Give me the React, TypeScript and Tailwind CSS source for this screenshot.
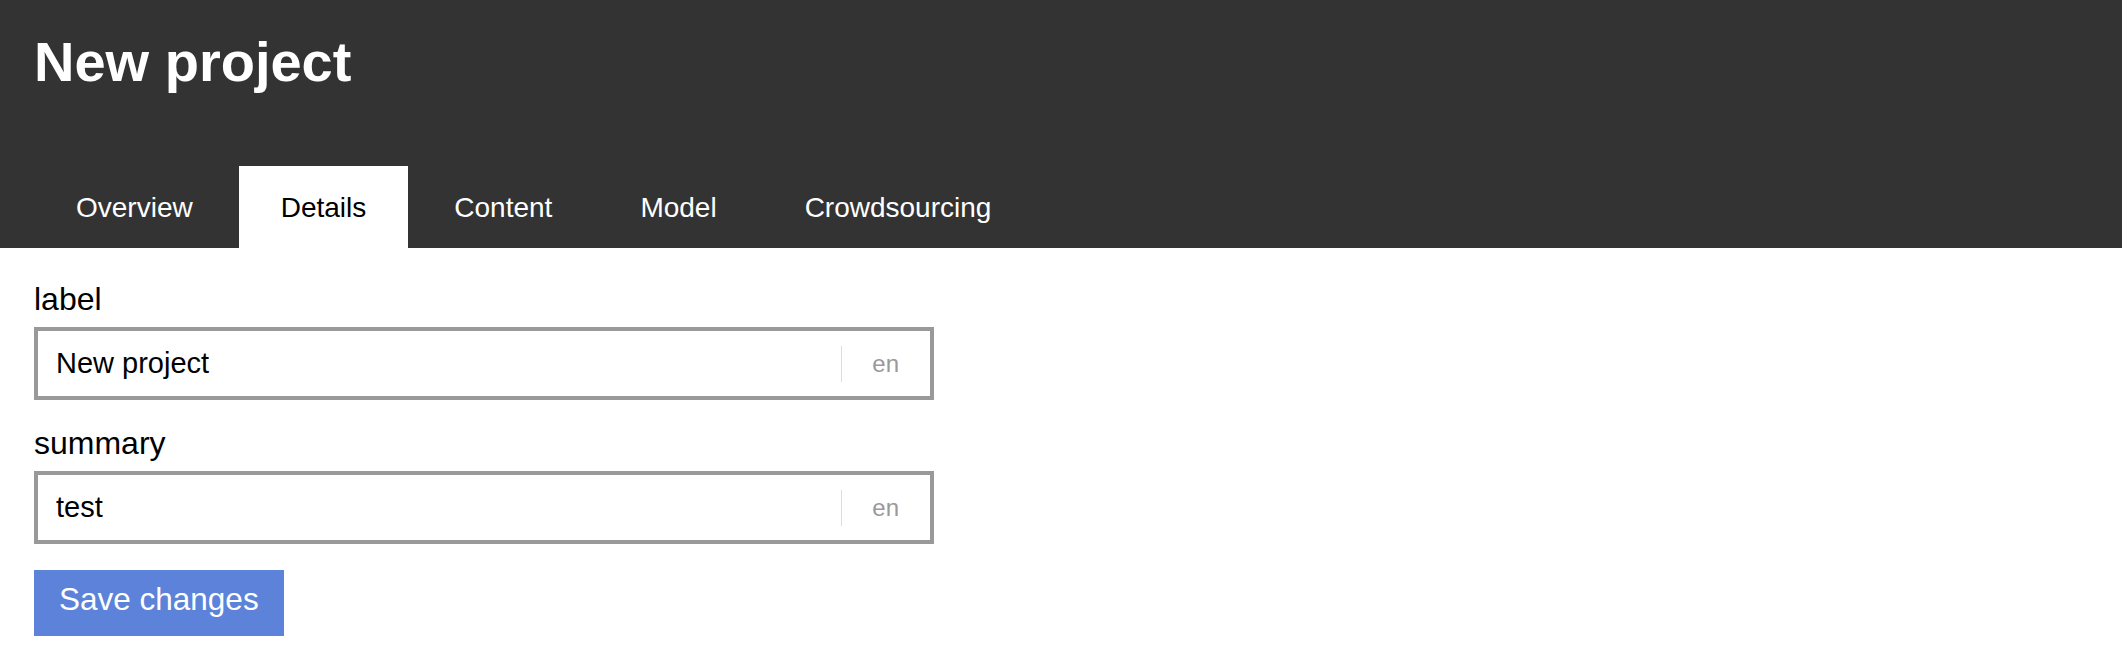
const TABS = ['Overview', 'Details', 'Content', 'Model', 'Crowdsourcing'];

function LangField({ label, value }: { label: string; value: string }) {
  return (
    <div className="flex flex-col">
      <label className="text-[32px] leading-none text-black mb-[12px]">{label}</label>
      <div className="flex items-center w-[900px] h-[73px] border-4 border-[#999] bg-white">
        <input
          className="flex-1 min-w-0 h-full pl-[18px] text-[29px] text-black bg-transparent outline-none"
          style={{ fontFamily: '"Liberation Sans", Arial, sans-serif' }}
          defaultValue={value}
        />
        <span className="flex items-center h-[36px] border-l border-[#ddd] pl-[30px] pr-[31px] text-[24px] text-[#999]">
          en
        </span>
      </div>
    </div>
  );
}

export default function App() {
  const active = 'Details';

  return (
    <div className="min-h-screen bg-white font-['Liberation_Sans',Arial,sans-serif]">
      <header className="flex flex-col h-[248px] bg-[#333] px-[34px]">
        <h1 className="pt-[34px] text-[56px] leading-none font-bold text-white">New project</h1>
        <nav className="mt-auto flex gap-[4px]">
          {TABS.map((tab) => (
            <div
              key={tab}
              className={`h-[82px] px-[42px] pt-[28px] text-[28px] leading-none ${
                tab === active ? 'bg-white text-black' : 'text-white'
              }`}
            >
              {tab}
            </div>
          ))}
        </nav>
      </header>

      <main className="flex flex-col px-[34px] pt-[35px]">
        <div className="flex flex-col gap-[27px]">
          <LangField label="label" value="New project" />
          <LangField label="summary" value="test" />
        </div>
        <button className="mt-[26px] self-start h-[66px] px-[25px] pb-[6px] bg-[#5c83d9] text-white text-[31.5px] leading-none">
          Save changes
        </button>
      </main>
    </div>
  );
}
